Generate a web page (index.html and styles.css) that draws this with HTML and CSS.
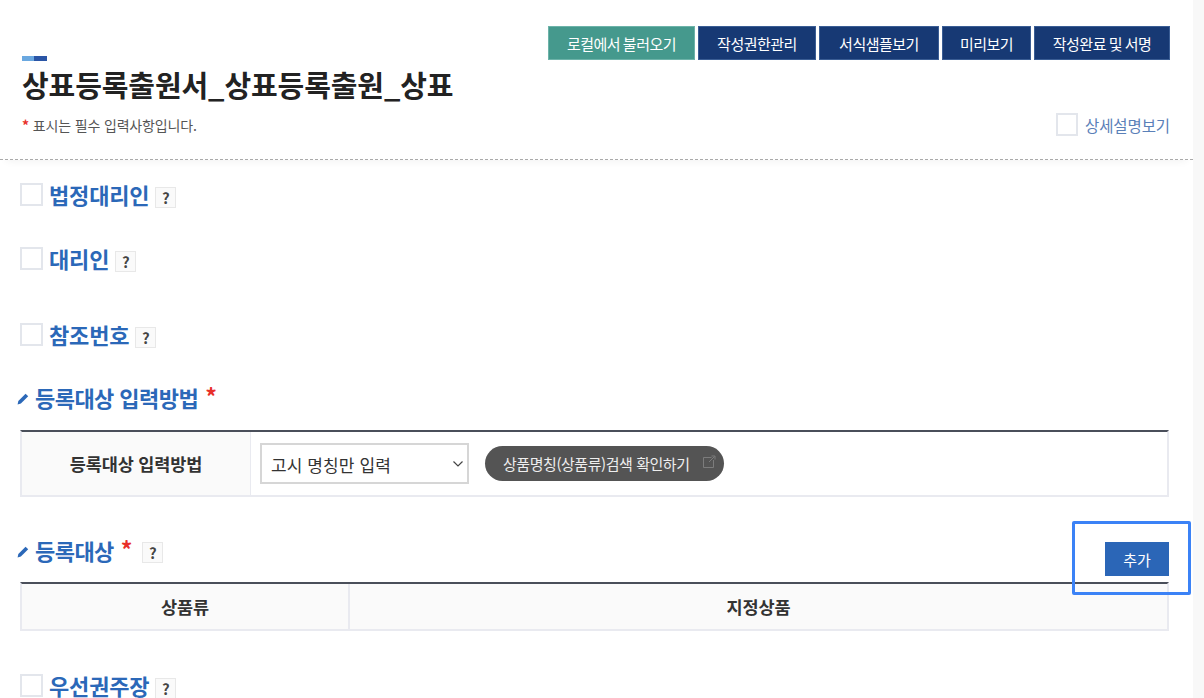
FILE: index.html
```html
<!DOCTYPE html>
<html lang="ko">
<head>
<meta charset="utf-8">
<title>상표등록출원서</title>
<link rel="stylesheet" href="styles.css">
</head>
<body>
<div class="page">
  <main class="main">
    <header class="head">
      <div class="actions">
        <button class="btn btn-teal w147">로컬에서 불러오기</button>
        <button class="btn w117">작성권한관리</button>
        <button class="btn w119">서식샘플보기</button>
        <button class="btn w89">미리보기</button>
        <button class="btn w136">작성완료 및 서명</button>
      </div>
      <div class="accent"><span class="accent-a"></span><span class="accent-b"></span></div>
      <h1 class="title">상표등록출원서_상표등록출원_상표</h1>
      <div class="sub">
        <p class="note"><span class="req-small">*</span> 표시는 필수 입력사항입니다.</p>
        <label class="detail"><span class="check check-sm"></span>상세설명보기</label>
      </div>
    </header>
    <div class="content">
      <div class="opt opt-1"><span class="check"></span><h2 class="opt-title">법정대리인</h2><span class="help">?</span></div>
      <div class="opt opt-2"><span class="check"></span><h2 class="opt-title">대리인</h2><span class="help">?</span></div>
      <div class="opt opt-3"><span class="check"></span><h2 class="opt-title">참조번호</h2><span class="help">?</span></div>

      <div class="sec sec-1">
        <svg class="pen" viewBox="0 0 12 12"><path d="M0.6 11.6 L1.3 8 L8.6 0.8 L11.2 3.2 L3.9 10.6 Z" fill="#2b68b8"/></svg>
        <h2 class="sec-title">등록대상 입력방법</h2><span class="req">*</span>
      </div>
      <div class="table table-a">
        <div class="th th-a">등록대상 입력방법</div>
        <div class="td">
          <div class="select">고시 명칭만 입력
            <svg class="chev" viewBox="0 0 12 8"><path d="M1.5 1.5 L6 6 L10.5 1.5" fill="none" stroke="#444" stroke-width="1.2"/></svg>
          </div>
          <button class="pill">상품명칭(상품류)검색 확인하기
            <svg class="ext" viewBox="0 0 14 14"><path d="M9.5 2.5H1.5V12.5H11.5V5M7 7 L12.5 1.5M9.5 1H13V4.5" fill="none" stroke="#7c7c7c" stroke-width="1"/></svg>
          </button>
        </div>
      </div>

      <div class="sec sec-2">
        <svg class="pen" viewBox="0 0 12 12"><path d="M0.6 11.6 L1.3 8 L8.6 0.8 L11.2 3.2 L3.9 10.6 Z" fill="#2b68b8"/></svg>
        <h2 class="sec-title">등록대상</h2><span class="req">*</span><span class="help help-b">?</span>
        <button class="add">추가</button>
      </div>
      <div class="table table-b">
        <div class="th th-b">상품류</div>
        <div class="th th-c">지정상품</div>
      </div>

      <div class="opt opt-4"><span class="check"></span><h2 class="opt-title">우선권주장</h2><span class="help">?</span></div>
    </div>
    <div class="highlight"></div>
  </main>
  <div class="scroll"></div>
</div>
</body>
</html>
```
FILE: styles.css
```css
* { box-sizing: border-box; }
html, body { margin: 0; padding: 0; height: 100%; overflow: hidden; background: #fff; }
body { font-family: "Noto Sans CJK KR", "Noto Sans", sans-serif; color: #222; }
.page { display: flex; width: 1204px; height: 698px; }
.main { position: relative; width: 1193px; flex: none; }
.scroll { flex: 1; background: #f8f8f8; }
h1, h2, p { margin: 0; }
button { font-family: inherit; cursor: pointer; }

.head { height: 160px; padding: 26px 23px 0 21px; border-bottom: 1px dashed #aaa; box-shadow: 0 7px 8px -6px rgba(0, 0, 0, .06); }
.actions { display: flex; justify-content: flex-end; gap: 3px; height: 35px; }
.btn { height: 34px; padding: 0; background: #173974; color: #fff; border: 1px solid #3a5d94; font-size: 15px; letter-spacing: -0.5px; word-spacing: -1px; }
.btn-teal { background: #45998d; border-color: #6db3a9; }
.w147 { width: 147px; } .w117 { width: 118px; } .w119 { width: 120px; } .w89 { width: 89px; } .w136 { width: 136px; }
.accent { display: flex; margin: -5px 0 0 0.5px; width: 25px; height: 5px; }
.accent-a { flex: 1; background: #6aa8e0; }
.accent-b { flex: 1; background: #2a55a6; }
.title { margin: 3px 0 0 1px; font-size: 29px; line-height: 40px; font-weight: 700; color: #222; letter-spacing: -0.1px; }
.sub { display: flex; justify-content: space-between; align-items: center; margin-top: 9px; padding-left: 1px; }
.note { font-size: 14px; color: #555; letter-spacing: -0.15px; }
.req-small { color: #e8302a; font-weight: 700; }
.detail { display: flex; align-items: center; gap: 7px; font-size: 15.5px; color: #5a80b8; letter-spacing: -0.1px; }

.content { padding: 0 24px 0 20px; }
.check { display: block; width: 23px; height: 23px; margin-top: -2px; border: 2px solid #e3e6ec; background: #fff; flex: none; }
.check-sm { width: 22px; height: 23px; margin-top: 0; }
.opt { display: flex; align-items: center; height: 30px; }
.opt-1 { margin-top: 20px; }
.opt-2 { margin-top: 34px; }
.opt-3 { margin-top: 46px; }
.opt-4 { margin-top: 40px; }
.opt-title { margin: -2px 6px 0 6px; font-size: 22px; font-weight: 700; color: #2b68b8; line-height: 30px; letter-spacing: -0.15px; }
.help { display: flex; align-items: center; justify-content: center; width: 21px; height: 21px; margin-top: 5px; border: 1px solid #e8e8e8; background: #fafafa; font-size: 15px; font-weight: 700; color: #444; }

.sec { position: relative; display: flex; align-items: center; height: 30px; margin-left: -3px; }
.sec-1 { margin-top: 32px; }
.sec-2 { margin-top: 38px; }
.pen { width: 12px; height: 12px; margin: 4px 6px 0 0; flex: none; }
.sec-title { font-size: 22px; font-weight: 700; color: #2b68b8; line-height: 30px; letter-spacing: -0.55px; }
.req { margin: -2px 0 0 7px; color: #e8302a; font-size: 23px; font-weight: 700; line-height: 24px; }
.help-b { margin-left: 10px; margin-top: 5px; }
.add { margin-left: auto; width: 64px; height: 34px; background: #2b66b7; color: #fff; border: 0; font-size: 15px; align-self: flex-start; margin-top: 7px; }

.table { display: flex; border-top: 2px solid #4a4f5a; border-left: 2px solid #e9eaf0; border-right: 2px solid #e9eaf0; border-bottom: 2px solid #e9eaf0; }
.table-a { height: 67px; margin-top: 18px; }
.table-b { height: 49px; margin-top: 17px; }
.th { display: flex; align-items: center; justify-content: center; background: #fafafa; font-size: 17.5px; font-weight: 700; color: #333; letter-spacing: -0.15px; }
.th-a { width: 229px; flex: none; border-right: 1px solid #e9eaf0; }
.th-b { width: 328px; flex: none; border-right: 2px solid #e9eaf0; }
.th-c { flex: 1; }
.td { flex: 1; display: flex; align-items: center; padding-left: 9px; }
.select { position: relative; width: 209px; height: 41px; padding-left: 9px; line-height: 39px; border: 2px solid #d6d6d6; font-size: 17px; letter-spacing: 0.1px; color: #333; background: #fff; margin-top: -1px; }
.chev { position: absolute; right: 3px; top: 15px; width: 12px; height: 8px; }
.pill { display: flex; align-items: center; height: 35px; width: 239px; margin-left: 16px; padding: 0 0 0 18px; border: 0; border-radius: 18px; background: #545454; color: #eee; font-size: 15px; letter-spacing: -0.45px; margin-top: 0; white-space: nowrap; }
.ext { width: 14px; height: 14px; margin: -4px 0 0 12px; flex: none; }

.highlight { position: absolute; left: 1072px; top: 521px; width: 119px; height: 74px; border: 3px solid #3b82f6; border-radius: 2px; }
```
